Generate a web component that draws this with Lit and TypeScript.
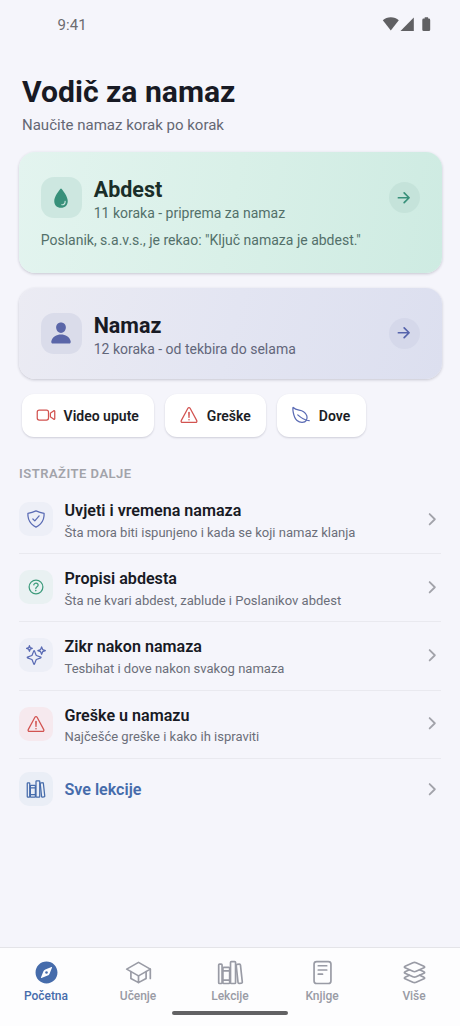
import { LitElement, html, svg, css } from "lit";
import { customElement, property } from "lit/decorators.js";

const ICONS: Record<string, unknown> = {
  video: svg`<g class="line"><path d="M374.79 308.78L457.5 367a16 16 0 0022.5-14.62V159.62A16 16 0 00457.5 145l-82.71 58.22A16 16 0 00368 216.3v79.4a16 16 0 006.79 13.08z"/><path d="M268 384H84a52.15 52.15 0 01-52-52V180a52.15 52.15 0 0152-52h184.48A51.68 51.68 0 01320 179.52V332a52.15 52.15 0 01-52 52z"/></g>`,
  warning: svg`<g class="line"><path d="M85.57 446.25h340.86a32 32 0 0028.17-47.17L284.18 82.58c-12.09-22.44-44.27-22.44-56.36 0L57.4 399.08a32 32 0 0028.17 47.17z"/><path d="M250.26 195.39l5.74 122 5.73-121.95a5.74 5.74 0 00-5.79-6h0a5.74 5.74 0 00-5.68 5.95z"/></g><circle class="fill" cx="256" cy="377" r="20"/>`,
  leaf: svg`<path class="line" d="M321.89 171.42C233 114 141 155.22 56 65.22c-19.8-21-8.3 235.5 98.1 332.7 77.79 71 197.9 63.08 238.4-5.92s18.28-163.17-70.61-220.58zM173 253c86 81 175 129 292 147"/>`,
  shield: svg`<g class="line"><path d="M336 176L225.2 304 176 255.8"/><path d="M463.1 112.37C373.68 96.33 336.71 84.45 256 48c-80.71 36.45-117.68 48.33-207.1 64.37C32.7 369.13 240.58 457.79 256 464c15.42-6.21 223.3-94.87 207.1-351.63z"/></g>`,
  help: svg`<g class="line"><path d="M256 80a176 176 0 10176 176A176 176 0 00256 80z"/><path d="M200 202.29s.84-17.5 19.57-32.57C230.68 160.77 244 158.18 256 158c10.93-.14 20.69 1.67 26.53 4.45 10 4.76 29.47 16.38 29.47 41.09 0 26-17 37.81-36.37 50.8S251 281.43 251 296"/></g><circle class="fill" cx="250" cy="348" r="20"/>`,
  sparkles: svg`<path class="line" d="M259.92 262.91L216.4 149.77a9 9 0 00-16.8 0l-43.52 113.14a9 9 0 01-5.17 5.17L37.77 311.6a9 9 0 000 16.8l113.14 43.52a9 9 0 015.17 5.17l43.52 113.14a9 9 0 0016.8 0l43.52-113.14a9 9 0 015.17-5.17l113.14-43.52a9 9 0 000-16.8l-113.14-43.52a9 9 0 01-5.17-5.17zM108 68L88 16 68 68 16 88l52 20 20 52 20-52 52-20-52-20zM426.67 117.33L400 48l-26.67 69.33L304 144l69.33 26.67L400 240l26.67-69.33L496 144l-69.33-26.67z"/>`,
  library: svg`<g class="line"><rect x="32" y="96" width="64" height="368" rx="16"/><path d="M112 224h128M112 400h128"/><rect x="112" y="160" width="128" height="304" rx="16"/><rect x="256" y="48" width="96" height="416" rx="16"/><path d="M422.46 96.11l-40.4 4.25c-11.12 1.17-19.18 11.57-17.93 23.1l34.92 321.59c1.26 11.53 11.37 20 22.49 18.84l40.4-4.25c11.12-1.17 19.18-11.57 17.93-23.1L445 115c-1.31-11.58-11.42-20.06-22.54-18.89z"/></g>`,
  school: svg`<g class="line"><path d="M32 192L256 64l224 128-224 128L32 192z"/><path d="M112 240v128l144 80 144-80V240M480 368V192M256 320v128"/></g>`,
  layers: svg`<g class="line"><path d="M434.8 137.65l-149.36-68.1c-16.19-7.4-42.69-7.4-58.88 0L77.3 137.65c-17.6 8-17.6 21.09 0 29.09l148 67.5c16.89 7.7 44.69 7.7 61.58 0l148-67.5c17.52-8 17.52-21.1-.08-29.09zM160 308.52l-82.7 37.11c-17.6 8-17.6 21.1 0 29.1l148 67.5c16.89 7.69 44.69 7.69 61.58 0l148-67.5c17.6-8 17.6-21.1 0-29.1l-79.94-38.47"/><path d="M160 204.48l-82.8 37.16c-17.6 8-17.6 21.1 0 29.1l148 67.49c16.89 7.7 44.69 7.7 61.58 0l148-67.49c17.7-8 17.7-21.1.1-29.1L352 204.48"/></g>`,
  reader: svg`<g class="line"><rect x="96" y="48" width="320" height="416" rx="48"/><path d="M176 128h160M176 208h160M176 288h80"/></g>`,
  compass: svg`<path class="fill" fill-rule="evenodd" d="M256 48C141.13 48 48 141.13 48 256s93.13 208 208 208 208-93.13 208-208S370.87 48 256 48zm105.07 113.33l-46.88 117.2a64 64 0 01-35.66 35.66l-117.2 46.88a8 8 0 01-10.4-10.4l46.88-117.2a64 64 0 0135.66-35.66l117.2-46.88a8 8 0 0110.4 10.4z"/><circle class="fill" cx="256" cy="256" r="24"/>`,
  water: svg`<path class="fill" d="M265.12 60.12a12 12 0 00-18.23 0C215.23 97.15 112 225.17 112 320c0 88.37 55.64 144 144 144s144-55.63 144-144c0-94.83-103.23-222.85-134.88-259.88zM272 412a12 12 0 01-11.34-16 11.89 11.89 0 0111.41-8A60.06 60.06 0 00332 328.07a11.89 11.89 0 018-11.41A12 12 0 01356 328a84.09 84.09 0 01-84 84z"/>`,
  person: svg`<path class="fill" d="M332.64 64.58C313.18 43.57 286 32 256 32c-30.16 0-57.43 11.5-76.8 32.38-19.58 21.11-29.12 49.8-26.88 80.78C156.76 206.28 203.27 256 256 256s99.16-49.71 103.67-110.82c2.27-30.7-7.33-59.33-27.03-80.6zM432 480H80a31 31 0 01-24.2-11.13c-6.5-7.77-9.12-18.38-7.18-29.11C57.06 392.94 83.4 353.61 124.8 326c36.78-24.51 83.37-38 131.2-38s94.42 13.5 131.2 38c41.4 27.6 67.74 66.93 76.18 113.75 1.94 10.73-.68 21.34-7.18 29.11A31 31 0 01432 480z"/>`,
  arrow: svg`<path class="line bold" d="M268 112l144 144-144 144M392 256H100"/>`,
  chevron: svg`<path class="line bold" d="M184 112l144 144-144 144"/>`,
};

@customElement("ion-glyph")
class IonGlyph extends LitElement {
  @property() name = "";
  static styles = css`
    :host { display: block; flex: none; }
    svg { display: block; width: 100%; height: 100%; overflow: visible; }
    .line { fill: none; stroke: currentColor; stroke-width: 32; stroke-linecap: round; stroke-linejoin: round; }
    .bold { stroke-width: 50; }
    .fill { fill: currentColor; }
  `;
  render() {
    return html`<svg viewBox="0 0 512 512" aria-hidden="true">${ICONS[this.name]}</svg>`;
  }
}

const CHIPS = [
  { icon: "video", tone: "red", label: "Video upute" },
  { icon: "warning", tone: "red", label: "Greške" },
  { icon: "leaf", tone: "indigo", label: "Dove" },
];

const ROWS = [
  { icon: "shield", tone: "indigo", title: "Uvjeti i vremena namaza", sub: "Šta mora biti ispunjeno i kada se koji namaz klanja" },
  { icon: "help", tone: "green", title: "Propisi abdesta", sub: "Šta ne kvari abdest, zablude i Poslanikov abdest" },
  { icon: "sparkles", tone: "indigo", title: "Zikr nakon namaza", sub: "Tesbihat i dove nakon svakog namaza" },
  { icon: "warning", tone: "red", title: "Greške u namazu", sub: "Najčešće greške i kako ih ispraviti" },
];

const TABS = [
  { icon: "compass", label: "Početna" },
  { icon: "school", label: "Učenje" },
  { icon: "library", label: "Lekcije" },
  { icon: "reader", label: "Knjige" },
  { icon: "layers", label: "Više" },
];

@customElement("app-root")
class AppRoot extends LitElement {
  static styles = css`
    :host {
      display: flex; flex-direction: column; box-sizing: border-box;
      width: 100%; height: 1026px; overflow: hidden;
      background: #f5f5fb; color: #181a24;
      font-family: Roboto, sans-serif;
    }
    * { box-sizing: border-box; }
    .status {
      display: flex; justify-content: space-between; align-items: center;
      height: 50px; padding: 0 29px 0 57.5px; flex: none;
      font-size: 15px; letter-spacing: 0.1px; color: #6c6c70;
    }
    .signals { width: 49px; height: 16px; fill: #606063; margin-top: -2px; }
    main { flex: 1; min-height: 0; }
    header { padding: 23px 22px 0; height: 102.3px; }
    h1 { margin: 0; font-size: 30.1px; line-height: 38px; font-weight: 700; }
    .lead { margin: 4px 0 0; font-size: 15px; line-height: 20px; color: #646773; }
    .card {
      margin: 0 18.3px 15px 18.7px; border-radius: 16px; padding: 0 22px;
      box-shadow: 0 1px 3px rgba(30, 30, 60, 0.22);
    }
    .abdest { height: 120.3px; padding-top: 25px; background: linear-gradient(100deg, #e3f4ef, #d9f0e8 50%, #ceebe2); color: #1a2e29; }
    .namaz { height: 91.5px; padding-top: 25px; background: linear-gradient(105deg, #ebebf3, #e3e5f2 50%, #dcdfef); margin-bottom: 15.2px; }
    .head { display: flex; align-items: center; height: 41px; }
    .tile {
      display: grid; place-items: center; width: 41px; height: 41px;
      border-radius: 13px; margin-right: 12px;
    }
    .tile ion-glyph { width: 24px; height: 24px; }
    .grow { flex: 1; min-width: 0; }
    .head .grow { padding-top: 4px; }
    .namaz .grow { padding-top: 5px; }
    h2 { margin: 0; font-size: 21.5px; line-height: 26px; font-weight: 700; }
    .count { font-size: 14px; line-height: 19px; margin-top: 1px; }
    .abdest .tile { background: #cde7e0; color: #38907a; }
    .abdest .go { background: #c5e3da; color: #38907a; }
    .abdest .count, .quote { color: #53706a; }
    .namaz .tile { background: #dadcea; color: #5a66a8; }
    .namaz .go { background: #d5d8ea; color: #5664ac; }
    .namaz .count { color: #62667a; }
    .quote { margin: 13px 0 0; font-size: 14px; line-height: 19px; }
    .go { display: grid; place-items: center; width: 31px; height: 31px; border-radius: 50%; }
    .go ion-glyph { width: 17.5px; height: 17.5px; }
    .chips { display: flex; gap: 10.8px; padding-left: 21.7px; }
    .chip {
      display: flex; align-items: center; gap: 7.6px; height: 42.5px; padding: 0 15.3px 0 14.3px;
      border-radius: 12px; background: #fff; box-shadow: 0 1px 2px rgba(30, 30, 60, 0.18);
      font-size: 14px; font-weight: 600; color: #1c1e26;
    }
    .chip ion-glyph { width: 20px; height: 20px; margin: -1px 0 0; }
    .red { color: #d25350; }
    .indigo { color: #5a6bb4; }
    .green { color: #3d9b7c; }
    .section {
      margin: 28px 19px 4.3px; font-size: 13px; line-height: 17px; font-weight: 600;
      letter-spacing: 0.5px; color: #a2a3aa;
    }
    .row {
      display: flex; align-items: center; height: 68.15px; margin: 0 19px 0 19px;
      padding-bottom: 1px; border-bottom: 1px solid #e9e9ef;
    }
    .badge {
      display: grid; place-items: center; width: 34px; height: 34px;
      border-radius: 10px; margin-right: 11.5px; background: #edeff7;
    }
    .badge.green { background: #e9f1f2; }
    .badge.red { background: #f6e9ee; }
    .badge ion-glyph { width: 20px; height: 20px; }
    .row .grow { padding-top: 3.6px; }
    h3 { margin: 0; font-size: 16.1px; line-height: 22px; font-weight: 600; }
    .sub { font-size: 13.03px; line-height: 18px; margin-top: 1.5px; color: #6b6e79; }
    .chev { width: 18.5px; height: 18.5px; color: #a2a3aa; }
    .row.last { height: 62px; border-bottom: 0; }
    .last .grow { padding-top: 1px; }
    .last h3, .last .badge { color: #466cab; }
    .last .badge { background: #eaeef6; }
    nav {
      display: grid; grid-template-columns: repeat(5, 1fr); flex: none;
      height: 79px; padding-top: 11.3px; background: #fdfdfe;
      border-top: 1px solid #e4e4e8; position: relative;
    }
    .tab { display: flex; flex-direction: column; align-items: center; font-size: 12px; letter-spacing: -0.06px; line-height: 16px; font-weight: 500; color: #999ba5; }
    .tab ion-glyph { width: 27px; height: 27px; margin-bottom: 1.5px; }
    .tab.active { color: #466cab; }
    .home { position: absolute; left: 172px; bottom: 11px; width: 116px; height: 4px; border-radius: 2px; background: #626264; }
  `;

  render() {
    return html`
      <div class="status">
        <span>9:41</span>
        <svg class="signals" viewBox="0 0 49 16">
          <path d="M.8 4.2C4.8.3 12.8.3 16.8 4.2L8.8 14.6z" stroke-linejoin="round"/>
          <path d="M18.5 15L31.8 1.5V15z"/>
          <path d="M41.2 2.5h1.5V1.3h3.4v1.2h.7a1.4 1.4 0 011.4 1.4v9.8a1.4 1.4 0 01-1.4 1.4h-5.1a1.4 1.4 0 01-1.4-1.4V3.9a1.4 1.4 0 011.4-1.4z"/>
        </svg>
      </div>
      <main>
        <header>
          <h1>Vodič za namaz</h1>
          <p class="lead">Naučite namaz korak po korak</p>
        </header>
        <section class="card abdest">
          <div class="head">
            <div class="tile"><ion-glyph name="water"></ion-glyph></div>
            <div class="grow"><h2>Abdest</h2><div class="count">11 koraka - priprema za namaz</div></div>
            <div class="go"><ion-glyph name="arrow"></ion-glyph></div>
          </div>
          <p class="quote">Poslanik, s.a.v.s., je rekao: "Ključ namaza je abdest."</p>
        </section>
        <section class="card namaz">
          <div class="head">
            <div class="tile"><ion-glyph name="person"></ion-glyph></div>
            <div class="grow"><h2>Namaz</h2><div class="count">12 koraka - od tekbira do selama</div></div>
            <div class="go"><ion-glyph name="arrow"></ion-glyph></div>
          </div>
        </section>
        <div class="chips">
          ${CHIPS.map((c) => html`<div class="chip"><ion-glyph class=${c.tone} name=${c.icon}></ion-glyph><span>${c.label}</span></div>`)}
        </div>
        <div class="section">ISTRAŽITE DALJE</div>
        ${ROWS.map((r) => html`
          <div class="row">
            <div class="badge ${r.tone}"><ion-glyph name=${r.icon}></ion-glyph></div>
            <div class="grow"><h3>${r.title}</h3><div class="sub">${r.sub}</div></div>
            <ion-glyph class="chev" name="chevron"></ion-glyph>
          </div>`)}
        <div class="row last">
          <div class="badge"><ion-glyph name="library"></ion-glyph></div>
          <div class="grow"><h3>Sve lekcije</h3></div>
          <ion-glyph class="chev" name="chevron"></ion-glyph>
        </div>
      </main>
      <nav>
        ${TABS.map((t, i) => html`<div class="tab ${i === 0 ? "active" : ""}"><ion-glyph name=${t.icon}></ion-glyph><span>${t.label}</span></div>`)}
        <div class="home"></div>
      </nav>
    `;
  }
}
